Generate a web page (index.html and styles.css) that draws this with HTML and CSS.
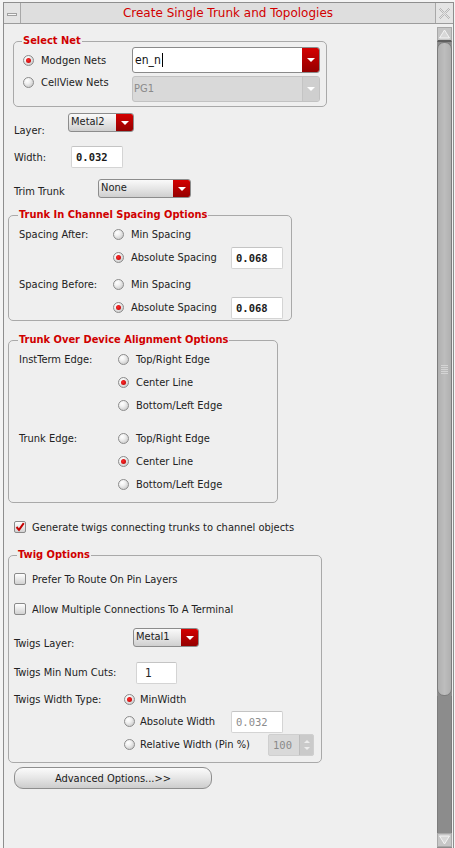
FILE: index.html
```html
<!DOCTYPE html>
<html>
<head>
<meta charset="utf-8">
<link rel="stylesheet" href="styles.css">
</head>
<body>
<div class="window">
  <div class="titlebar">
    <div class="tb-btn tb-left"><span class="dash"></span></div>
    <div class="title">Create Single Trunk and Topologies</div>
    <div class="tb-btn tb-right">
      <svg width="13" height="13" viewBox="0 0 13 13"><path d="M2 1 L6.5 5.5 L11 1 M2 12 L6.5 7.5 L11 12 M1 2 L5.5 6.5 L1 11 M12 2 L7.5 6.5 L12 11" fill="none" stroke="#b8b8b8" stroke-width="1"/></svg>
    </div>
  </div>
  <div class="main">
    <div class="content">
      <fieldset class="group g-select">
        <legend>Select Net</legend>
        <div class="sel-grid">
          <div class="opt"><span class="radio on"></span><span>Modgen Nets</span></div>
          <div class="combo"><span class="combo-text">en_n<span class="caret"></span></span><span class="ddbtn"><i class="tri"></i></span></div>
          <div class="opt opt-top"><span class="radio"></span><span>CellView Nets</span></div>
          <div class="combo disabled"><span class="combo-text">PG1</span><span class="ddbtn dis"><i class="tri"></i></span></div>
        </div>
      </fieldset>

      <div class="frow r-layer">
        <span class="flabel l-layer">Layer:</span>
        <div class="drop w-metal"><span>Metal2</span><span class="ddbtn"><i class="tri"></i></span></div>
      </div>
      <div class="frow r-width">
        <span class="flabel l-width">Width:</span>
        <div class="field w-num mono">0.032</div>
      </div>
      <div class="frow r-trim">
        <span class="flabel l-trim">Trim Trunk</span>
        <div class="drop w-trim"><span>None</span><span class="ddbtn"><i class="tri"></i></span></div>
      </div>

      <fieldset class="group g-spacing">
        <legend>Trunk In Channel Spacing Options</legend>
        <div class="sp-grid">
          <span class="glabel">Spacing After:</span>
          <div class="opt"><span class="radio"></span><span>Min Spacing</span></div>
          <span></span>
          <span></span>
          <div class="opt"><span class="radio on"></span><span>Absolute Spacing</span></div>
          <div class="field w-num2 mono">0.068</div>
          <span class="spacer"></span>
          <span class="glabel">Spacing Before:</span>
          <div class="opt"><span class="radio"></span><span>Min Spacing</span></div>
          <span></span>
          <span></span>
          <div class="opt"><span class="radio on"></span><span>Absolute Spacing</span></div>
          <div class="field w-num2 mono">0.068</div>
        </div>
      </fieldset>

      <fieldset class="group g-align">
        <legend>Trunk Over Device Alignment Options</legend>
        <div class="al-grid">
          <span class="glabel">InstTerm Edge:</span>
          <div class="opt"><span class="radio"></span><span>Top/Right Edge</span></div>
          <span></span>
          <div class="opt"><span class="radio on"></span><span>Center Line</span></div>
          <span></span>
          <div class="opt"><span class="radio"></span><span>Bottom/Left Edge</span></div>
          <span class="spacer"></span>
          <span class="glabel">Trunk Edge:</span>
          <div class="opt"><span class="radio"></span><span>Top/Right Edge</span></div>
          <span></span>
          <div class="opt"><span class="radio on"></span><span>Center Line</span></div>
          <span></span>
          <div class="opt"><span class="radio"></span><span>Bottom/Left Edge</span></div>
        </div>
      </fieldset>

      <div class="check-row gen">
        <span class="check on"><svg width="10" height="10" viewBox="0 0 10 10"><path d="M1.5 5 L4 7.8 L8.8 1.2" fill="none" stroke="#c40000" stroke-width="2"/></svg></span>
        <span>Generate twigs connecting trunks to channel objects</span>
      </div>

      <fieldset class="group g-twig">
        <legend>Twig Options</legend>
        <div class="check-row cb1"><span class="check"></span><span>Prefer To Route On Pin Layers</span></div>
        <div class="check-row cb2"><span class="check"></span><span>Allow Multiple Connections To A Terminal</span></div>
        <div class="frow r-tlayer">
          <span class="flabel l-tlayer">Twigs Layer:</span>
          <div class="drop w-metal"><span>Metal1</span><span class="ddbtn"><i class="tri"></i></span></div>
        </div>
        <div class="frow r-cuts">
          <span class="flabel l-cuts">Twigs Min Num Cuts:</span>
          <div class="field w-cuts">1</div>
        </div>
        <div class="tw-grid">
          <span class="glabel">Twigs Width Type:</span>
          <div class="opt"><span class="radio on"></span><span>MinWidth</span></div>
          <span></span>
          <span></span>
          <div class="opt"><span class="radio"></span><span>Absolute Width</span></div>
          <div class="field w-num2 mono dim">0.032</div>
          <span></span>
          <div class="opt"><span class="radio"></span><span>Relative Width (Pin %)</span></div>
          <div class="spin"><span class="spin-val mono">100</span><span class="spin-btns"><i class="up"></i><i class="dn"></i></span></div>
        </div>
      </fieldset>

      <div class="btn-row"><button class="adv">Advanced Options...&gt;&gt;</button></div>
    </div>
    <div class="scrollbar">
      <div class="sb-btn up"><svg width="13" height="12" viewBox="0 0 13 12"><path d="M6.5 2 L11.5 10 L1.5 10 Z" fill="#d8d8d8" stroke="#f4f4f4" stroke-width="1"/></svg></div>
      <div class="thumb"><div class="grip"><i></i><i></i><i></i><i></i><i></i></div></div>
      <div class="track"></div>
      <div class="sb-btn down"><svg width="13" height="12" viewBox="0 0 13 12"><path d="M6.5 10 L11.5 2 L1.5 2 Z" fill="#d8d8d8" stroke="#f4f4f4" stroke-width="1"/></svg></div>
    </div>
  </div>
</div>
</body>
</html>
```

FILE: styles.css
```css
* { box-sizing: border-box; }
html, body { margin: 0; padding: 0; }
body {
  background: #f4f4f4;
  font-family: "DejaVu Sans Condensed", "DejaVu Sans", sans-serif;
  font-size: 11px;
  color: #222;
  overflow: hidden;
}
.window {
  margin: 2px 1px 0 3px;
  height: 846px;
  border: 1px solid #8e8e8e;
  border-bottom: 0;
  background: #efefef;
  display: flex;
  flex-direction: column;
}
.titlebar {
  height: 21px;
  display: flex;
  background: #dedede;
  border-bottom: 1px solid #9c9c9c;
  flex-shrink: 0;
}
.tb-btn {
  width: 17px;
  display: flex;
  align-items: center;
  justify-content: center;
  background: #e4e4e4;
}
.tb-left { border-right: 1px solid #a8a8a8; }
.tb-right { border-left: 1px solid #a8a8a8; width: 18px; }
.dash {
  display: block;
  width: 10px;
  height: 3px;
  margin-top: 3px;
  background: #f6f6f6;
  border: 1px solid #a0a0a0;
}
.title {
  flex: 1;
  text-align: center;
  color: #d20000;
  font-family: "DejaVu Sans", sans-serif;
  font-size: 12px;
  line-height: 20px;
}
.main {
  flex: 1;
  display: flex;
  min-height: 0;
}
.content {
  flex: 1;
  display: flex;
  flex-direction: column;
  align-items: flex-start;
}

/* group boxes */
.group {
  margin: 0;
  padding: 0;
  border: 1px solid #a9a9a9;
  border-radius: 5px;
  min-width: 0;
}
.group legend {
  color: #d00000;
  font-weight: bold;
  font-size: 11px;
  line-height: 12px;
  padding: 0 1px;
}
.g-select { margin: 11px 0 0 9px; width: 314px; padding: 0 0 4px 0; }
.g-select legend { margin-left: 8px; }
.sel-grid {
  display: grid;
  grid-template-columns: 118px 188px;
  grid-template-rows: 26px 26px;
  row-gap: 3px;
}
.opt {
  display: flex;
  align-items: center;
  white-space: nowrap;
}
.g-select .opt { padding-left: 9px; }
.g-select .opt-top { align-self: start; margin-top: 0; height: 12px; }
.radio {
  width: 11px;
  height: 11px;
  border-radius: 50%;
  border: 1px solid #8c8c8c;
  background: radial-gradient(circle at 35% 30%, #ffffff 0%, #f0f0f0 35%, #bdbdbd 100%);
  margin-right: 7px;
  position: relative;
  flex-shrink: 0;
}
.radio.on::after {
  content: "";
  position: absolute;
  left: 2px;
  top: 2px;
  width: 5px;
  height: 5px;
  border-radius: 50%;
  background: radial-gradient(circle at 40% 40%, #ff2a2a, #b00000);
}
.combo {
  display: flex;
  border: 1px solid #8a8a8a;
  border-radius: 3px;
  background: #fff;
  overflow: hidden;
}
.combo-text {
  flex: 1;
  padding-left: 2px;
  font-size: 12px;
  line-height: 24px;
  color: #111;
  display: flex;
  align-items: center;
}
.caret {
  display: inline-block;
  width: 1px;
  height: 14px;
  background: #000;
  margin-left: 1px;
}
.combo.disabled {
  background: #d9d9d9;
  border-color: #c2c2c2;
}
.combo.disabled .combo-text { color: #8a8a8a; padding-left: 1px; font-size: 11px; }
.ddbtn {
  width: 17px;
  background: linear-gradient(#d40000, #940000);
  display: flex;
  align-items: center;
  justify-content: center;
  flex-shrink: 0;
}
.ddbtn.dis { background: #cfcfcf; border-left: 1px solid #c4c4c4; }
.tri {
  display: block;
  width: 0;
  height: 0;
  border-left: 4px solid transparent;
  border-right: 4px solid transparent;
  border-top: 4px solid #fff;
}

/* form rows */
.frow {
  display: flex;
  align-items: flex-start;
  margin-left: 10px;
}
.flabel { line-height: 13px; white-space: nowrap; }
.r-layer { margin-top: 6px; height: 19px; }
.l-layer { width: 54px; padding-top: 11px; }
.r-width { margin-top: 14px; height: 22px; }
.l-width { width: 57px; padding-top: 5px; }
.r-trim { margin-top: 11px; height: 19px; }
.l-trim { width: 84px; padding-top: 6px; }
.drop {
  height: 19px;
  display: flex;
  border: 1px solid #8c8c8c;
  border-radius: 3px;
  overflow: hidden;
  background: linear-gradient(#fafafa, #e6e6e6 50%, #cfcfcf);
}
.drop > span:first-child {
  flex: 1;
  padding-left: 2px;
  line-height: 15px;
  font-size: 11px;
}
.w-metal { width: 66px; }
.w-trim { width: 93px; }
.field {
  height: 22px;
  background: #fff;
  border: 1px solid #d4d4d4;
  border-top-color: #c4c4c4;
  border-radius: 2px;
  line-height: 20px;
  padding-left: 4px;
  font-size: 11px;
}
.mono {
  font-family: "DejaVu Sans Mono", monospace;
  font-weight: bold;
  font-size: 10.5px;
  color: #1a1a1a;
}
.w-num { width: 52px; }
.w-num2 { width: 52px; }
.w-cuts { width: 41px; padding-left: 8px; font-size: 12px; }
.dim { color: #8c8c8c; font-weight: normal; background: #fff; }

.spacer { grid-column: 1 / -1; }

/* spacing group */
.g-spacing { margin: 11px 0 0 4px; width: 284px; padding: 0 0 1px 10px; }
.g-spacing legend { margin-left: -1px; }
.sp-grid {
  display: grid;
  grid-template-columns: 94px 118px 52px;
  grid-template-rows: 23px 23px 4px 23px 23px;
  margin-top: 2px;
  align-items: center;
}
.glabel { white-space: nowrap; }

/* alignment group */
.g-align { margin: 13px 0 0 4px; width: 270px; padding: 0 0 6px 10px; }
.g-align legend { margin-left: -1px; }
.al-grid {
  display: grid;
  grid-template-columns: 99px 150px;
  grid-template-rows: 23px 23px 23px 10px 23px 23px 23px;
  margin-top: 2px;
  align-items: center;
}

/* checkboxes */
.check-row {
  display: flex;
  align-items: center;
  height: 18px;
  white-space: nowrap;
}
.check {
  width: 12px;
  height: 12px;
  border: 1px solid #8a8a8a;
  border-radius: 2px;
  background: linear-gradient(#ffffff, #d2d2d2);
  margin-right: 6px;
  display: flex;
  align-items: center;
  justify-content: center;
  flex-shrink: 0;
}
.gen { margin: 15px 0 0 10px; }

/* twig group */
.g-twig { margin: 13px 0 0 4px; width: 314px; padding: 0 0 6px 5px; }
.g-twig legend { margin-left: 3px; }
.cb1 { margin-top: 9px; }
.cb2 { margin-top: 12px; }
.g-twig .frow { margin-left: 0; }
.r-tlayer { margin-top: 10px; height: 19px; }
.l-tlayer { width: 119px; padding-top: 9px; }
.r-cuts { margin-top: 15px; height: 22px; }
.l-cuts { width: 122px; padding-top: 4px; }
.tw-grid {
  display: grid;
  grid-template-columns: 110px 107px 52px;
  grid-template-rows: 22px 23px 23px;
  margin: 4px 0 0 0;
  align-items: center;
}
.tw-grid .radio { margin-right: 5px; }
.spin {
  width: 46px;
  height: 22px;
  margin-left: 37px;
  display: flex;
  border: 1px solid #cfcfcf;
  border-radius: 2px;
  background: #d9d9d9;
  overflow: hidden;
}
.spin-val {
  flex: 1;
  line-height: 20px;
  padding-left: 4px;
  color: #8a8a8a;
  font-weight: normal;
}
.spin-btns {
  width: 14px;
  display: flex;
  flex-direction: column;
  align-items: center;
  justify-content: center;
  gap: 4px;
  background: #cacaca;
  border-left: 1px solid #bdbdbd;
}
.spin-btns i {
  display: block;
  width: 0;
  height: 0;
  border-left: 3px solid transparent;
  border-right: 3px solid transparent;
}
.spin-btns .up { border-bottom: 3px solid #ededed; }
.spin-btns .dn { border-top: 3px solid #ededed; }

.btn-row { margin: 4px 0 0 10px; }
.adv {
  width: 198px;
  height: 22px;
  border: 1px solid #8e8e8e;
  border-radius: 9px;
  background: linear-gradient(#fbfbfb, #e8e8e8 45%, #cdcdcd);
  font-family: "DejaVu Sans Condensed", "DejaVu Sans", sans-serif;
  font-size: 11px;
  color: #1a1a1a;
  padding: 0;
  text-align: center;
}

/* scrollbar */
.scrollbar {
  width: 15px;
  margin: 3px 1px 0 0;
  display: flex;
  flex-direction: column;
  background: #8c8c8c;
}
.sb-btn {
  height: 14px;
  background: #c6c6c6;
  border: 1px solid #a8a8a8;
  display: flex;
  align-items: center;
  justify-content: center;
  flex-shrink: 0;
}
.sb-btn.up { border-bottom: 2px solid #5e5e5e; height: 15px; }
.thumb {
  height: 654px;
  flex-shrink: 0;
  background: linear-gradient(90deg, #b0b0b0, #bdbdbd 50%, #b0b0b0);
  border: 1px solid #7c7c7c;
  border-radius: 7px;
  display: flex;
  align-items: center;
  justify-content: center;
}
.grip {
  display: flex;
  flex-direction: column;
  gap: 1px;
}
.grip i {
  display: block;
  width: 7px;
  height: 1px;
  background: #8a8a8a;
  border-bottom: 1px solid #d4d4d4;
}
.track {
  flex: 1;
  background: #8c8c8c;
  border-left: 1px solid #7c7c7c;
  border-right: 1px solid #7c7c7c;
}
.sb-btn.down { margin-bottom: 1px; }
```
